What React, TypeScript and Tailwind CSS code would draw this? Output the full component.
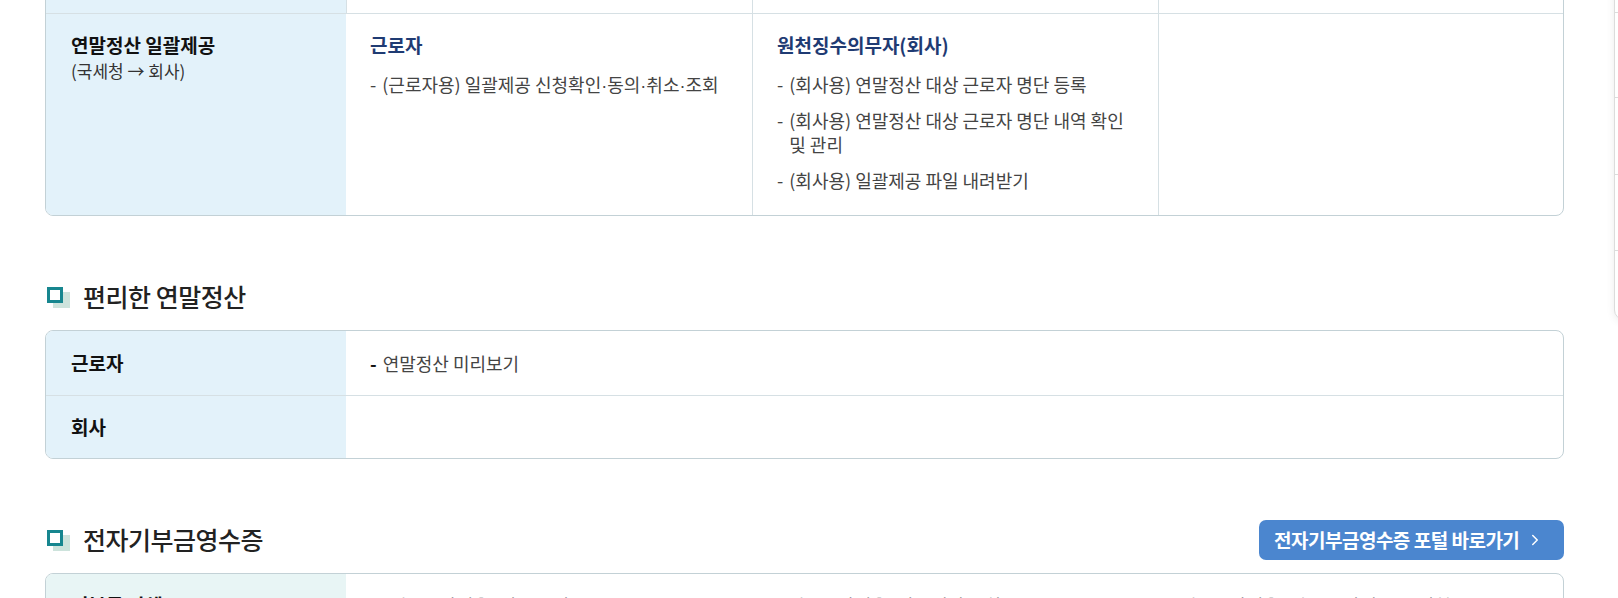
import { ChevronRight } from 'lucide-react'

function Item({ children }: { children: React.ReactNode }) {
  return (
    <li className="flex">
      <span className="mr-[6px]">-</span>
      <span>{children}</span>
    </li>
  )
}

// 가운뎃점은 CJK 폰트에서 전각으로 나와서 라틴 폰트로 좁게
const Dot = () => <span className="font-['Liberation_Sans',sans-serif]">·</span>

function SectionTitle({ title, action }: { title: string; action?: React.ReactNode }) {
  return (
    <div className="mt-[61px] mb-[13px] h-[40px] flex items-center justify-between">
      <div className="flex items-center">
        <span className="relative ml-[2px] mr-[12px] w-[24px] h-[21px]">
          <span className="absolute left-[6px] top-[5px] w-[17px] h-[16px] bg-[#cde3dc]" />
          <span className="absolute left-0 top-0 w-[16px] h-[16px] border-[3px] border-[#17868f] bg-white" />
        </span>
        <h2 className="text-[25px] tracking-[-0.5px] font-medium text-[#222]">{title}</h2>
      </div>
      {action}
    </div>
  )
}

export default function App() {
  return (
    <div className="relative h-[598px] overflow-hidden bg-white font-['Noto_Sans_CJK_KR',sans-serif] text-[#444]">
      <div className="ml-[45px] w-[1519px]">
        {/* 연말정산 일괄제공 */}
        <div className="-mt-[48px] rounded-lg border border-[#c3d1d6] overflow-hidden">
          <div className="grid grid-cols-[300px_406px_406px_1fr] h-[60px]">
            <div className="bg-[#e3f2fa]" />
            <div className="border-l border-[#d6e0e4]" />
            <div className="border-l border-[#d6e0e4]" />
            <div className="border-l border-[#d6e0e4]" />
          </div>
          <div className="grid grid-cols-[300px_406px_406px_1fr] border-t border-[#d6e0e4]">
            <div className="bg-[#e3f2fa] pl-[25px] pt-[18px]">
              <div className="text-[19px] leading-[26px] font-bold text-[#111]">연말정산 일괄제공</div>
              <div className="text-[17px] leading-[26px] text-[#333]">(국세청 → 회사)</div>
            </div>
            <div className="pl-[24px] pr-[20px] pt-[18px]">
              <div className="text-[19px] leading-[26px] font-semibold text-[#1f3b73]">근로자</div>
              <ul className="mt-[14px] text-[18px] leading-[24px] space-y-[12px]">
                <Item>
                  (근로자용) 일괄제공 신청확인<Dot />동의<Dot />취소<Dot />조회
                </Item>
              </ul>
            </div>
            <div className="border-l border-[#d6e0e4] pl-[24px] pr-[24px] pt-[18px] pb-[23px]">
              <div className="text-[19px] leading-[26px] font-semibold text-[#1f3b73]">원천징수의무자(회사)</div>
              <ul className="mt-[14px] text-[18px] leading-[24px] space-y-[12px]">
                <Item>(회사용) 연말정산 대상 근로자 명단 등록</Item>
                <Item>(회사용) 연말정산 대상 근로자 명단 내역 확인 및 관리</Item>
                <Item>(회사용) 일괄제공 파일 내려받기</Item>
              </ul>
            </div>
            <div className="border-l border-[#d6e0e4]" />
          </div>
        </div>

        {/* 편리한 연말정산 */}
        <SectionTitle title="편리한 연말정산" />
        <div className="rounded-lg border border-[#c3d1d6] overflow-hidden">
          <div className="grid grid-cols-[300px_1fr] h-[64px]">
            <div className="bg-[#e3f2fa] pl-[25px] flex items-center text-[19px] font-bold text-[#111]">근로자</div>
            <div className="pl-[24px] flex items-center text-[18px]">
              <span className="mr-[6px] font-bold text-[#111]">-</span>연말정산 미리보기
            </div>
          </div>
          <div className="grid grid-cols-[300px_1fr] h-[63px] border-t border-[#d6e0e4]">
            <div className="bg-[#e3f2fa] pl-[25px] flex items-center text-[19px] font-bold text-[#111]">회사</div>
            <div />
          </div>
        </div>

        {/* 전자기부금영수증 */}
        <SectionTitle
          title="전자기부금영수증"
          action={
            <a className="h-[40px] w-[305px] rounded-[7px] bg-[#4b86cf] text-white flex items-center justify-between pl-[15px] pr-[20px]">
              <span className="text-[19px] font-bold tracking-[-0.5px]">전자기부금영수증 포털 바로가기</span>
              <ChevronRight className="w-[18px] h-[18px]" strokeWidth={2} />
            </a>
          }
        />
        <div className="rounded-lg border border-[#c3d1d6] overflow-hidden">
          <div className="grid grid-cols-[300px_406px_406px_1fr]">
            <div className="bg-[#e8f5f5] pl-[25px] pt-[18px] pb-[20px] text-[19px] leading-[26px] font-bold text-[#111]">기부금 단체</div>
            <div className="pl-[24px] pt-[19px] text-[18px] leading-[24px]">
              <span className="ml-[14px]">(기부금단체용) 영수증 발급</span>
            </div>
            <div className="pl-[30px] pt-[19px] text-[18px] leading-[24px]">(기부금단체용) 발급내역 조회</div>
            <div className="pl-[16px] pt-[19px] text-[18px] leading-[24px]">(기부금단체용) 기부금 단체 등록 신청</div>
          </div>
        </div>
      </div>

      {/* 우측 퀵메뉴 */}
      <div className="absolute left-[1614px] top-[-20px] w-[80px] h-[340px] bg-white border border-[#dcdcdc] rounded-[10px] shadow-[0_2px_8px_rgba(0,0,0,0.08)] flex flex-col">
        <div className="h-[32px] border-b border-[#dcdcdc]" />
        <div className="h-[85px] border-b border-[#dcdcdc]" />
        <div className="h-[77px] border-b border-[#dcdcdc]" />
        <div className="h-[76px] border-b border-[#dcdcdc]" />
      </div>
    </div>
  )
}
